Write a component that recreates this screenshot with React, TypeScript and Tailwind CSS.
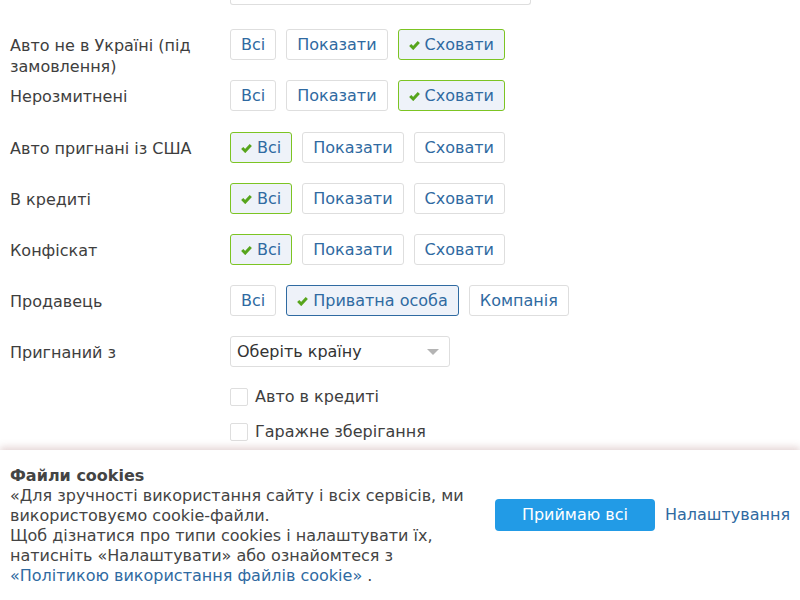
import { ReactNode } from "react";

const Check = () => (
  <svg width="11" height="10" viewBox="0 0 11 10" className="shrink-0">
    <path d="M1.2 5 L4.2 8 L9.8 2" fill="none" stroke="#57a51c" strokeWidth="3" strokeLinejoin="miter" />
  </svg>
);

function Opt({ children, active, tone = "green" }: { children: ReactNode; active?: boolean; tone?: "green" | "blue" }) {
  const base = "h-[31px] px-[10px] flex items-center gap-[5px] rounded-[3px] border text-[#2f6aa1] whitespace-nowrap";
  if (!active) return <div className={base + " border-[#dedede] bg-white"}>{children}</div>;
  return (
    <div className={base + (tone === "green" ? " border-[#7cc423] bg-[#eef2f9]" : " border-[#2f6aa1] bg-[#eef2f9]")}>
      <Check />
      {children}
    </div>
  );
}

function Row({ label, children, tall }: { label: string; children: ReactNode; tall?: boolean }) {
  return (
    <div className={"flex items-start " + (tall ? "h-[52px]" : "h-[51px]")}>
      <div className="w-[230px] shrink-0 pl-[10px] pr-[10px] pt-[6px] leading-[21px] text-[#3e3e3e]">{label}</div>
      <div className="flex gap-[10px]">{children}</div>
    </div>
  );
}

export default function App() {
  const three = (a: number) => (
    <>
      <Opt active={a === 0}>Всі</Opt>
      <Opt active={a === 1}>Показати</Opt>
      <Opt active={a === 2}>Сховати</Opt>
    </>
  );

  return (
    <div className="relative w-[800px] h-[600px] overflow-hidden bg-white text-[16px] font-['DejaVu_Sans',sans-serif]">
      <div className="ml-[230px] w-[301px] h-[5px] border border-t-0 border-[#dedede] rounded-b-[3px]" />
      <div className="pt-[24px]">
        <Row label="Авто не в Україні (під замовлення)">{three(2)}</Row>
        <Row label="Нерозмитнені" tall>{three(2)}</Row>
        <Row label="Авто пригнані із США">{three(0)}</Row>
        <Row label="В кредиті">{three(0)}</Row>
        <Row label="Конфіскат">{three(0)}</Row>
        <Row label="Продавець">
          <Opt>Всі</Opt>
          <Opt active tone="blue">Приватна особа</Opt>
          <Opt>Компанія</Opt>
        </Row>
        <Row label="Пригнаний з">
          <div className="w-[220px] h-[31px] border border-[#dedede] rounded-[3px] flex items-center justify-between pl-[6px] pr-[10px] text-[#333]">
            <span>Оберіть країну</span>
            <svg width="12" height="6" viewBox="0 0 12 6">
              <path d="M0 0 H12 L6 6 Z" fill="#b4b4b4" />
            </svg>
          </div>
        </Row>
        <div className="ml-[230px] flex flex-col gap-[17px] pt-[1px] text-[#3e3e3e]">
          <label className="flex items-center gap-[7px] h-[18px]">
            <span className="w-[18px] h-[18px] border border-[#dedede] rounded-[2px] bg-white" />
            Авто в кредиті
          </label>
          <label className="flex items-center gap-[7px] h-[18px]">
            <span className="w-[18px] h-[18px] border border-[#dedede] rounded-[2px] bg-white" />
            Гаражне зберігання
          </label>
        </div>
      </div>

      <div className="absolute left-0 right-0 bottom-0 h-[150px] bg-white shadow-[0_-3px_7px_rgba(150,90,90,0.25)] flex items-start pl-[10px] pr-[10px] pt-[16px]">
        <div className="w-[475px] leading-[20px] text-[#444]">
          <div className="font-bold">Файли cookies</div>
          <div>«Для зручності використання сайту і всіх сервісів, ми використовуємо cookie-файли.</div>
          <div>
            Щоб дізнатися про типи cookies і налаштувати їх, натисніть «Налаштувати» або ознайомтеся з{" "}
            <a className="text-[#2f6aa1]">«Політикою використання файлів cookie»</a> .
          </div>
        </div>
        <div className="flex items-center gap-[10px] mt-[33px] ml-[10px]">
          <button className="w-[160px] h-[32px] rounded-[4px] bg-[#229be6] text-white">Приймаю всі</button>
          <a className="text-[#2f6aa1]">Налаштування</a>
        </div>
      </div>
    </div>
  );
}
